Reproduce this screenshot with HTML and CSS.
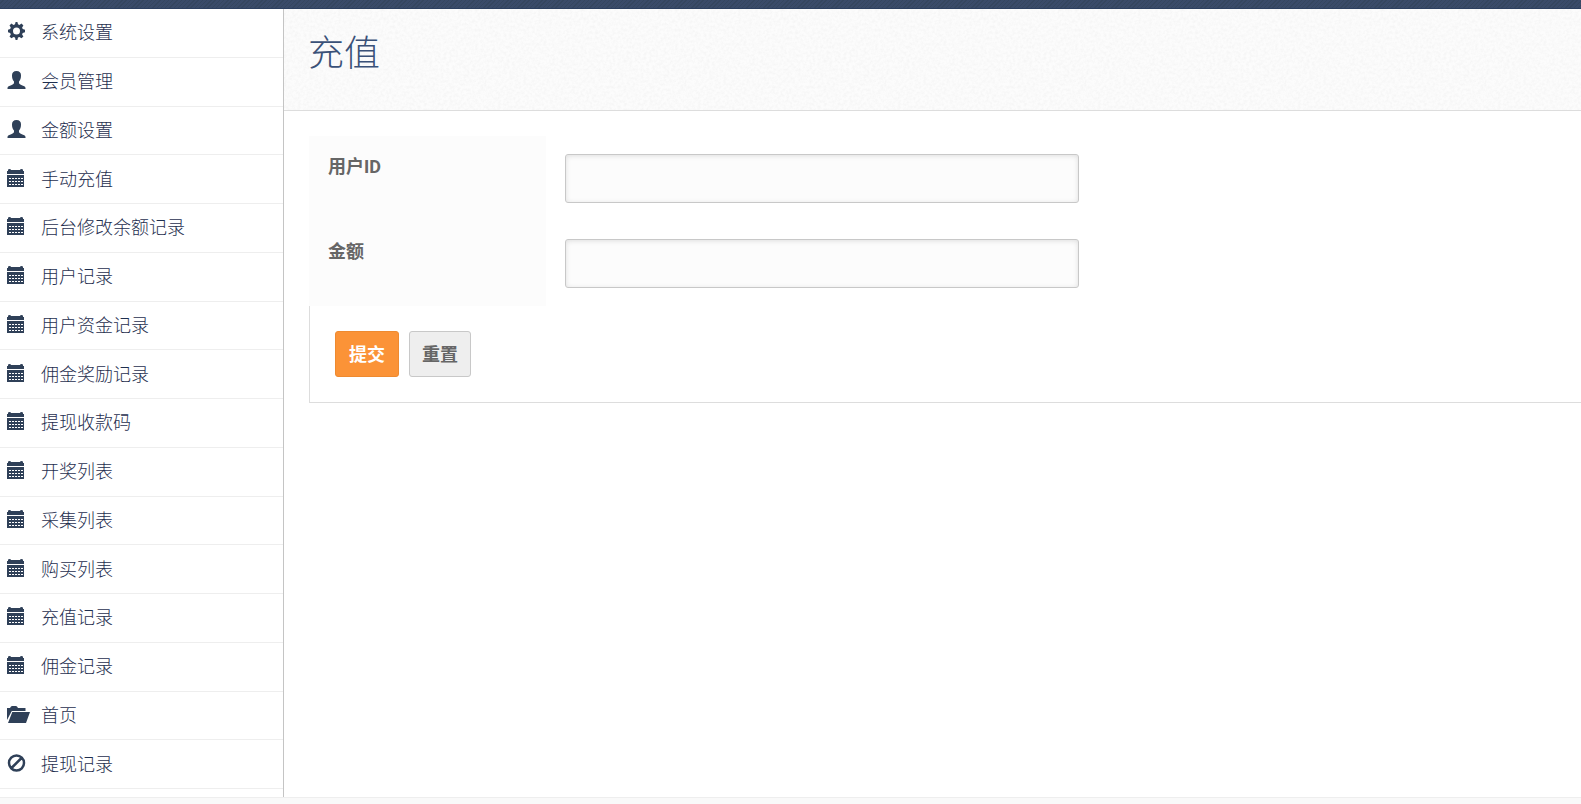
FILE: index.html
```html
<!DOCTYPE html>
<html lang="zh-CN">
<head>
<meta charset="utf-8">
<meta name="viewport" content="width=device-width, initial-scale=1">
<title>充值</title>
<link rel="stylesheet" href="styles.css">
</head>
<body>
<svg class="sprite" aria-hidden="true">
  <symbol id="gear" viewBox="0 0 24 18"><path fill-rule="evenodd" d="M8.600 0h1.800l.6 2.300 1.400.6 2.100-1.400 1.900 1.900-1.300 2.100.6 1.500 2.300.7v2.600l-2.300.6-.6 1.500 1.300 2-1.900 1.900-2.100-1.300-1.400.6-.6 2.400h-1.800l-.6-2.400-1.500-.6-2.100 1.300-1.900-1.900 1.300-2-.6-1.500L1 10.300V7.700L3.200 7l.6-1.500-1.300-2.100 1.900-1.900 2.100 1.400L8 2.300zM9.500 5.500a3.500 3.500 0 1 0 0 7 3.500 3.500 0 0 0 0-7z"/></symbol>
  <symbol id="user" viewBox="0 0 24 18"><path d="M9.500 0C6.500 0 5 1.700 5 4.200c0 2.700.5 4.800 2 6.200v1.400c0 1-1 1.600-2.300 2.100-2.500 1-4.200 1.600-4.200 3.100v1h18v-1c0-1.500-1.700-2.100-4.200-3.100-1.300-.5-2.300-1.100-2.300-2.100v-1.400c1.500-1.400 2-3.500 2-6.200C14 1.700 12.500 0 9.500 0z"/></symbol>
  <symbol id="calendar" viewBox="0 0 24 18"><path d="M0 2h1V1q0-1 1.500-1T4 1h9q0-1 1.500-1T16 1v1h1v3H0z"/><path fill-rule="evenodd" d="M0 6h17v12H0zM2 9v1h2V9zm3 0v1h2V9zm3 0v1h2V9zm3 0v1h2V9zm3 0v1h2V9zM2 12v1h2v-1zm3 0v1h2v-1zm3 0v1h2v-1zm3 0v1h2v-1zm3 0v1h2v-1zM2 15v1h2v-1zm3 0v1h2v-1zm3 0v1h2v-1zm3 0v1h2v-1zm3 0v1h2v-1z"/></symbol>
  <symbol id="folder" viewBox="0 0 24 18"><path d="M0 3h3q1-2 2-2h4q1 0 2 2h7.500v3H4.800L0 15zM5.300 7H23l-4 11H1z"/></symbol>
  <symbol id="ban" viewBox="0 0 24 18"><path fill="none" stroke="currentColor" stroke-width="2.500" d="M9.500 1.500a7.500 7.500 0 1 0 0 15 7.500 7.500 0 0 0 0-15M4.500 14l10-10"/></symbol>
</svg>
<div class="topbar"></div>
<div class="shell">
  <nav class="sidebar" aria-label="导航">
    <ul class="menu">
      <li><a href="#"><svg class="icon"><use href="#gear"/></svg>系统设置</a></li>
      <li><a href="#"><svg class="icon"><use href="#user"/></svg>会员管理</a></li>
      <li><a href="#"><svg class="icon"><use href="#user"/></svg>金额设置</a></li>
      <li><a href="#"><svg class="icon"><use href="#calendar"/></svg>手动充值</a></li>
      <li><a href="#"><svg class="icon"><use href="#calendar"/></svg>后台修改余额记录</a></li>
      <li><a href="#"><svg class="icon"><use href="#calendar"/></svg>用户记录</a></li>
      <li><a href="#"><svg class="icon"><use href="#calendar"/></svg>用户资金记录</a></li>
      <li><a href="#"><svg class="icon"><use href="#calendar"/></svg>佣金奖励记录</a></li>
      <li><a href="#"><svg class="icon"><use href="#calendar"/></svg>提现收款码</a></li>
      <li><a href="#"><svg class="icon"><use href="#calendar"/></svg>开奖列表</a></li>
      <li><a href="#"><svg class="icon"><use href="#calendar"/></svg>采集列表</a></li>
      <li><a href="#"><svg class="icon"><use href="#calendar"/></svg>购买列表</a></li>
      <li><a href="#"><svg class="icon"><use href="#calendar"/></svg>充值记录</a></li>
      <li><a href="#"><svg class="icon"><use href="#calendar"/></svg>佣金记录</a></li>
      <li><a href="#"><svg class="icon"><use href="#folder"/></svg>首页</a></li>
      <li><a href="#"><svg class="icon"><use href="#ban"/></svg>提现记录</a></li>
    </ul>
  </nav>
  <main class="main">
    <header class="page-head"><h1>充值</h1></header>
    <form class="form">
      <div class="field">
        <label for="uid">用户ID</label>
        <div class="control"><input id="uid" type="text"></div>
      </div>
      <div class="field">
        <label for="amount">金额</label>
        <div class="control"><input id="amount" type="text"></div>
      </div>
      <div class="actions">
        <button class="btn primary" type="submit">提交</button>
        <button class="btn" type="reset">重置</button>
      </div>
    </form>
  </main>
</div>
<footer class="footer"></footer>
</body>
</html>
```
FILE: styles.css
```css
* {
  box-sizing: border-box;
}

body {
  margin: 0;
  min-height: 100vh;
  display: flex;
  flex-direction: column;
  background: #fff;
  color: #666;
  font: 18px/24px Roboto, "Noto Sans CJK SC", sans-serif;
}

.sprite {
  display: none;
}

.topbar {
  height: 9px;
  background: repeating-linear-gradient(135deg, #3a4b69 0 2px, #35465f 2px 3px);
  border-bottom: 1px solid #2d4060;
}

.shell {
  flex: 1;
  display: flex;
}

.sidebar {
  width: 284px;
  flex: none;
  display: flex;
  padding-bottom: 8px;
  border-right: 1px solid #c4c4c4;
}

.menu {
  flex: 1;
  display: grid;
  grid-auto-rows: 1fr;
  margin: 0;
  padding: 0;
  list-style: none;
}

.menu li {
  display: flex;
  border-bottom: 1px solid #eee;
}

.menu a {
  flex: 1;
  display: flex;
  align-items: center;
  gap: 10px;
  padding: 12px 7px 11px;
  color: #1f2f4f;
  font-weight: 300;
  text-decoration: none;
}

.icon {
  width: 24px;
  height: 18px;
  margin-bottom: 4px;
  fill: #2f4058;
  color: #2f4058;
}

.main {
  flex: 1;
  min-width: 0;
}

.page-head {
  padding: 21px 24px 31px;
  border-bottom: 1px solid #ddd;
  background: #fcfcfc url("data:image/svg+xml,%3Csvg xmlns='http://www.w3.org/2000/svg' width='200' height='200'%3E%3Cfilter id='n'%3E%3CfeTurbulence type='fractalNoise' baseFrequency='.35' numOctaves='3' stitchTiles='stitch'/%3E%3CfeColorMatrix values='0 0 0 0 .5 0 0 0 0 .5 0 0 0 0 .5 .2 0 0 0 -.07'/%3E%3C/filter%3E%3Crect width='200' height='200' filter='url(%23n)'/%3E%3C/svg%3E");
}

.page-head h1 {
  margin: 0;
  color: #3a5178;
  font-size: 36px;
  font-weight: 300;
  line-height: 49px;
}

.form {
  margin: 25px 0 0 25px;
}

.field {
  display: flex;
}

.field label {
  flex: none;
  width: 237px;
  padding: 19px;
  background: #fcfcfc;
  font-weight: 700;
}

.control {
  flex: 1;
  padding: 18px 19px;
}

.control input {
  display: block;
  width: 100%;
  max-width: 514px;
  height: 49px;
  padding: 8px 12px;
  border: 1px solid #c8c8c8;
  border-radius: 3px;
  background: #fcfcfc;
  box-shadow: inset 0 1px 5px #ddd;
  color: inherit;
  font: inherit;
}

.actions {
  display: flex;
  gap: 10px;
  padding: 25px;
  border: solid #ddd;
  border-width: 0 0 1px 1px;
}

.btn {
  height: 46px;
  padding: 1px 12px 0;
  border: 1px solid #c8c8c8;
  border-radius: 3px;
  background: #eee;
  color: #666;
  font: inherit;
  font-weight: 700;
}

.btn.primary {
  padding: 1px 13px 0;
  border-color: #ee8a30;
  background: #fb9337;
  color: #fff;
}

.footer {
  height: 7px;
  border-top: 1px solid #eee;
  background: #f9f9f9;
}
```
